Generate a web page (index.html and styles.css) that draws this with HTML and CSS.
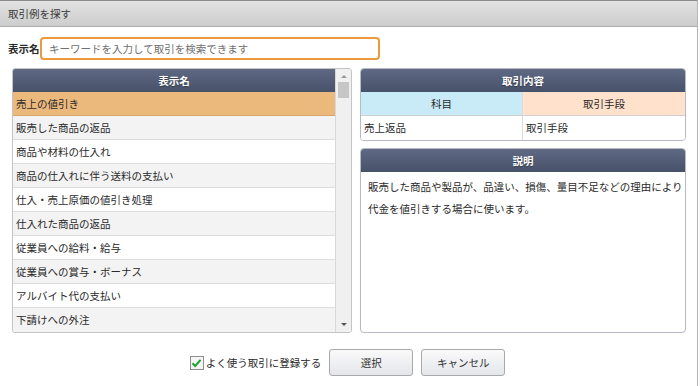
FILE: index.html
```html
<!DOCTYPE html>
<html lang="ja">
<head>
    <meta charset="UTF-8">
    <title>取引例を探す</title>
    <link rel="stylesheet" href="styles.css">
</head>
<body>
    <div class="dialog">
        <div class="titlebar">取引例を探す</div>

        <div class="search">
            <label for="keyword">表示名</label>
            <input type="text" id="keyword" placeholder="キーワードを入力して取引を検索できます">
        </div>

        <div class="main">
            <!-- 取引一覧 -->
            <div class="list-panel">
                <div class="list">
                    <div class="panel-head">表示名</div>
                    <div class="row selected">売上の値引き</div>
                    <div class="row alt">販売した商品の返品</div>
                    <div class="row">商品や材料の仕入れ</div>
                    <div class="row alt">商品の仕入れに伴う送料の支払い</div>
                    <div class="row">仕入・売上原価の値引き処理</div>
                    <div class="row alt">仕入れた商品の返品</div>
                    <div class="row">従業員への給料・給与</div>
                    <div class="row alt">従業員への賞与・ボーナス</div>
                    <div class="row">アルバイト代の支払い</div>
                    <div class="row alt last">下請けへの外注</div>
                </div>
                <div class="scrollbar">
                    <span class="arrow up"></span>
                    <span class="thumb"></span>
                    <span class="track"></span>
                    <span class="arrow down"></span>
                </div>
            </div>

            <!-- 詳細 -->
            <div class="detail">
                <div class="card">
                    <div class="panel-head">取引内容</div>
                    <div class="grid">
                        <div class="cell sub blue">科目</div>
                        <div class="cell sub peach">取引手段</div>
                        <div class="cell">売上返品</div>
                        <div class="cell">取引手段</div>
                    </div>
                </div>
                <div class="card grow">
                    <div class="panel-head">説明</div>
                    <p class="desc">販売した商品や製品が、品違い、損傷、量目不足などの理由により<br>代金を値引きする場合に使います。</p>
                </div>
            </div>
        </div>

        <div class="footer">
            <label class="check">
                <span class="box">
                    <svg width="11" height="10" viewBox="0 0 11 10"><path d="M1.5 5.2 L4.2 8 L9.6 1.8" fill="none" stroke="#1fa32a" stroke-width="2"/></svg>
                </span>
                よく使う取引に登録する
            </label>
            <button class="btn">選択</button>
            <button class="btn">キャンセル</button>
        </div>
    </div>
</body>
</html>
```

FILE: styles.css
```css
/* Global styles */
html, body {
    margin: 0;
    padding: 0;
    background-color: #ffffff;
    font-family: "Noto Sans CJK JP", "Noto Sans", sans-serif;
    font-size: 10.5px;
    color: #2a2a2a;
}

.dialog {
    width: 698px;
    height: 386px;
    border-right: 1px solid #b5b5b5;
    box-sizing: border-box;
    background-color: #fff;
}

/* Title bar */
.titlebar {
    height: 27px;
    line-height: 25px;
    padding-left: 8px;
    border-top: 1px solid #8a8a8a;
    border-bottom: 1px solid #adadad;
    box-sizing: border-box;
    background: linear-gradient(#e2e2e2, #cdcdcd);
    color: #3a3a3a;
}

/* Search row */
.search {
    display: flex;
    align-items: center;
    padding-left: 8px;
    margin-top: 10px;
    height: 23px;
}

.search label {
    font-weight: bold;
    width: 32px;
    white-space: nowrap;
}

.search input {
    width: 340px;
    height: 23px;
    padding: 0 7px;
    border: 2px solid #ec9a3c;
    border-radius: 4px;
    box-sizing: border-box;
    font-family: inherit;
    font-size: 10.5px;
    outline: none;
}

.search input::placeholder {
    color: #6f6f6f;
}

/* Main area */
.main {
    display: flex;
    gap: 8px;
    padding-left: 12px;
    margin-top: 8px;
    height: 265px;
}

.list-panel {
    width: 340px;
    flex-shrink: 0;
    display: flex;
    border: 1px solid #c4c4c4;
    border-radius: 3px;
    box-sizing: border-box;
    overflow: hidden;
}

.list {
    flex: 1;
    display: flex;
    flex-direction: column;
}

.panel-head {
    height: 23px;
    line-height: 23px;
    text-align: center;
    font-weight: bold;
    color: #fff;
    background: linear-gradient(#5e6983, #48516a);
    text-shadow: 0 1px 1px rgba(0, 0, 0, 0.4);
    flex-shrink: 0;
}

.row {
    height: 23px;
    line-height: 23px;
    padding-left: 3px;
    border-top: 1px solid #dcdcdc;
    background-color: #fff;
    white-space: nowrap;
}

.row.alt {
    background-color: #f3f3f3;
}

.row.selected {
    background-color: #ecb97d;
    border-top: none;
    border-bottom: 1px solid #d9a568;
}

.row.selected + .row {
    border-top: none;
}

.row.last {
    flex: 1;
}

/* Scrollbar */
.scrollbar {
    width: 15px;
    background-color: #f0f0f0;
    border-left: 1px solid #d8d8d8;
    display: flex;
    flex-direction: column;
    align-items: center;
}

.arrow {
    width: 0;
    height: 0;
    border-left: 3px solid transparent;
    border-right: 3px solid transparent;
}

.arrow.up {
    border-bottom: 3px solid #999;
    margin: 6px 0 4px;
}

.arrow.down {
    border-top: 3px solid #555;
    margin: 4px 0 6px;
}

.thumb {
    width: 11px;
    height: 16px;
    background-color: #c6c6c6;
}

.track {
    flex: 1;
}

/* Detail column */
.detail {
    width: 326px;
    flex-shrink: 0;
    display: flex;
    flex-direction: column;
    gap: 7px;
}

.card {
    border: 1px solid #b8bbc3;
    border-radius: 4px;
    overflow: hidden;
    box-shadow: 0 0 1px rgba(0, 0, 0, 0.15);
}

.card.grow {
    flex: 1;
}

.grid {
    display: grid;
    grid-template-columns: 162px 1fr;
}

.cell {
    height: 24px;
    line-height: 24px;
    padding-left: 3px;
    background-color: #fff;
}

.cell:nth-child(odd) {
    border-right: 1px solid #dcdcdc;
}

.cell.sub {
    padding-left: 0;
    text-align: center;
    height: 23px;
    line-height: 23px;
    border-bottom: 1px solid #d0d0d0;
}

.cell.blue {
    background-color: #c9eaf7;
}

.cell.peach {
    background-color: #ffe1cc;
}

.desc {
    margin: 0;
    padding: 4px 7px;
    line-height: 22px;
    white-space: nowrap;
}

/* Footer */
.footer {
    display: flex;
    justify-content: center;
    align-items: center;
    gap: 8px;
    margin-top: 16px;
    padding-right: 2px;
}

.check {
    display: flex;
    align-items: center;
    gap: 2px;
}

.box {
    width: 12px;
    height: 12px;
    border: 1px solid #8f8f8f;
    background-color: #f4f4f4;
    display: flex;
    align-items: center;
    justify-content: center;
}

.btn {
    width: 84px;
    height: 27px;
    border: 1px solid #a9a9a9;
    border-radius: 3px;
    background: linear-gradient(#fafafa, #e4e6ea);
    font-family: inherit;
    font-size: 10.5px;
    color: #333;
}
```
